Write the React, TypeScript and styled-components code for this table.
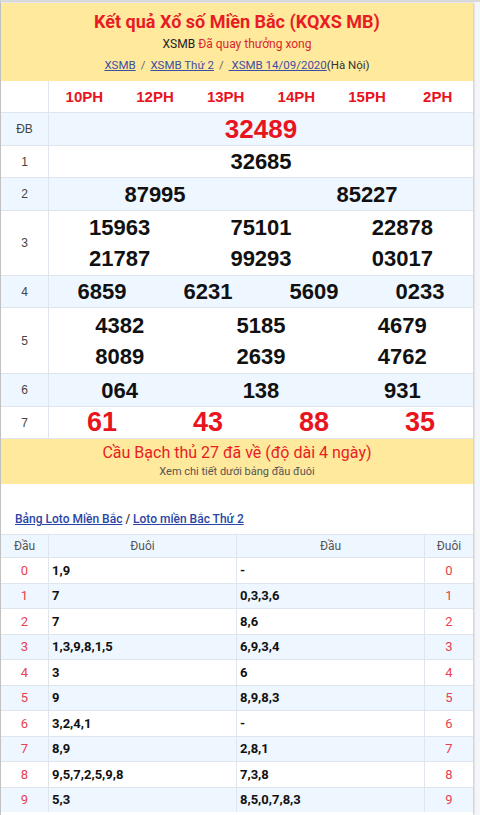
import React from "react";
import styled, { createGlobalStyle } from "styled-components";

const Global = createGlobalStyle`
  html, body { margin: 0; padding: 0; }
  body {
    background: #f5f6fa;
    font-family: Roboto, "Liberation Sans", Arial, sans-serif;
  }
  * { box-sizing: border-box; }
`;

const Page = styled.div`
  border-top: 2px solid #dadada;
  border-left: 1px solid #c4c4c4;
  min-height: 815px;
  display: flex;
`;

const Container = styled.div`
  width: 472px;
  margin-top: 1px;
  background: #fff;
  box-shadow: 1px 0 2px rgba(0, 0, 0, 0.2);
  min-height: 812px;
`;

const Header = styled.div`
  background: #ffe99c;
  padding: 6px 0 7px;
  text-align: center;
`;

const Title = styled.h1`
  margin: 0;
  font-size: 18px;
  line-height: 26px;
  font-weight: 700;
  color: #e81c24;
`;

const Sub = styled.div`
  font-size: 12px;
  line-height: 18px;
  color: #222;
`;

const SubRed = styled.span`
  color: #d8262c;
`;

const Crumbs = styled.div`
  margin-top: 3px;
  font-size: 11.5px;
  line-height: 18px;
  color: #333;
`;

const Crumb = styled.a`
  color: #3d4fa3;
  text-decoration: underline;
`;

const Sep = styled.span`
  color: #666;
  margin: 0 5px;
`;

const Row = styled.div<{ $alt?: boolean; $h: number }>`
  display: grid;
  grid-template-columns: 48px 1fr;
  height: ${(p) => p.$h}px;
  background: ${(p) => (p.$alt ? "#eef6ff" : "#fff")};
  border-bottom: 1px solid #dfe5ec;
`;

const Label = styled.div`
  border-right: 1px solid #dfe5ec;
  display: flex;
  align-items: center;
  justify-content: center;
  font-family: "Liberation Sans", Arial, sans-serif;
  font-size: 12px;
  color: #444;
`;

const Cells = styled.div<{ $cols: number }>`
  display: grid;
  grid-template-columns: repeat(${(p) => p.$cols}, 1fr);
  align-content: center;
`;

const Num = styled.div<{ $size?: number; $red?: boolean; $lh?: number }>`
  text-align: center;
  font-family: "Liberation Sans", Arial, sans-serif;
  font-weight: 700;
  font-size: ${(p) => p.$size ?? 22}px;
  line-height: ${(p) => p.$lh ?? 31}px;
  color: ${(p) => (p.$red ? "#e8141e" : "#111")};
`;

const Banner = styled.div`
  background: #ffe99c;
  height: 45px;
  text-align: center;
  padding-top: 3px;
`;

const BannerTitle = styled.div`
  font-size: 16px;
  line-height: 22px;
  color: #e81c24;
`;

const BannerSub = styled.div`
  font-size: 11px;
  line-height: 16px;
  color: #555;
`;

const Links = styled.div`
  padding: 26px 0 6px 14px;
  font-size: 12px;
  line-height: 18px;
  font-weight: 500;
  color: #333;
`;

const LotoLink = styled.a`
  color: #2a45a6;
  text-decoration: underline;
`;

const LotoRow = styled.div<{ $alt?: boolean; $h: number }>`
  display: grid;
  grid-template-columns: 48px 188px 188px 48px;
  height: ${(p) => p.$h}px;
  background: ${(p) => (p.$alt ? "#eef6ff" : "#fff")};
  border-top: 1px solid #dfe5ec;
`;

const LotoCell = styled.div<{ $kind: "head" | "key" | "val" }>`
  display: flex;
  align-items: center;
  justify-content: ${(p) => (p.$kind === "val" ? "flex-start" : "center")};
  padding-left: ${(p) => (p.$kind === "val" ? "3px" : "0")};
  border-right: 1px solid #dfe5ec;
  font-size: ${(p) => (p.$kind === "head" ? "12px" : "13px")};
  font-weight: ${(p) => (p.$kind === "val" ? 700 : 400)};
  color: ${(p) =>
    p.$kind === "head" ? "#555" : p.$kind === "key" ? "#e8414d" : "#111"};
  &:last-child { border-right: none; }
`;

const times = ["10PH", "12PH", "13PH", "14PH", "15PH", "2PH"];

type Prize = { label: string; cols: number; nums: string[]; h: number; size?: number; red?: boolean };

const prizes: Prize[] = [
  { label: "ĐB", cols: 1, nums: ["32489"], h: 33, size: 26, red: true },
  { label: "1", cols: 1, nums: ["32685"], h: 32 },
  { label: "2", cols: 2, nums: ["87995", "85227"], h: 33 },
  { label: "3", cols: 3, nums: ["15963", "75101", "22878", "21787", "99293", "03017"], h: 65 },
  { label: "4", cols: 4, nums: ["6859", "6231", "5609", "0233"], h: 32 },
  { label: "5", cols: 3, nums: ["4382", "5185", "4679", "8089", "2639", "4762"], h: 66 },
  { label: "6", cols: 3, nums: ["064", "138", "931"], h: 33 },
  { label: "7", cols: 4, nums: ["61", "43", "88", "35"], h: 32, size: 27, red: true },
];

const loto = [
  ["0", "1,9", "-", "0"],
  ["1", "7", "0,3,3,6", "1"],
  ["2", "7", "8,6", "2"],
  ["3", "1,3,9,8,1,5", "6,9,3,4", "3"],
  ["4", "3", "6", "4"],
  ["5", "9", "8,9,8,3", "5"],
  ["6", "3,2,4,1", "-", "6"],
  ["7", "8,9", "2,8,1", "7"],
  ["8", "9,5,7,2,5,9,8", "7,3,8", "8"],
  ["9", "5,3", "8,5,0,7,8,3", "9"],
];

export default function App() {
  return (
    <>
      <Global />
      <Page>
        <Container>
          <Header>
            <Title>Kết quả Xổ số Miền Bắc (KQXS MB)</Title>
            <Sub>
              XSMB <SubRed>Đã quay thưởng xong</SubRed>
            </Sub>
            <Crumbs>
              <Crumb>XSMB</Crumb>
              <Sep>/</Sep>
              <Crumb>XSMB Thứ 2</Crumb>
              <Sep>/</Sep>
              <Crumb> XSMB 14/09/2020</Crumb>(Hà Nội)
            </Crumbs>
          </Header>

          <Row $h={32}>
            <Label />
            <Cells $cols={6}>
              {times.map((t) => (
                <Num key={t} $size={15} $red>
                  {t}
                </Num>
              ))}
            </Cells>
          </Row>
          {prizes.map((p, i) => (
            <Row key={p.label} $h={p.h} $alt={i % 2 === 0}>
              <Label>{p.label}</Label>
              <Cells $cols={p.cols}>
                {p.nums.map((n, j) => (
                  <Num key={j} $size={p.size} $red={p.red}>
                    {n}
                  </Num>
                ))}
              </Cells>
            </Row>
          ))}

          <Banner>
            <BannerTitle>Cầu Bạch thủ 27 đã về (độ dài 4 ngày)</BannerTitle>
            <BannerSub>Xem chi tiết dưới bảng đầu đuôi</BannerSub>
          </Banner>

          <Links>
            <LotoLink>Bảng Loto Miền Bắc</LotoLink> / <LotoLink>Loto miền Bắc Thứ 2</LotoLink>
          </Links>

          <LotoRow $h={23} $alt>
            <LotoCell $kind="head">Đầu</LotoCell>
            <LotoCell $kind="head">Đuôi</LotoCell>
            <LotoCell $kind="head">Đầu</LotoCell>
            <LotoCell $kind="head">Đuôi</LotoCell>
          </LotoRow>
          {loto.map((r, i) => (
            <LotoRow key={r[0]} $h={25.5} $alt={i % 2 === 1}>
              <LotoCell $kind="key">{r[0]}</LotoCell>
              <LotoCell $kind="val">{r[1]}</LotoCell>
              <LotoCell $kind="val">{r[2]}</LotoCell>
              <LotoCell $kind="key">{r[3]}</LotoCell>
            </LotoRow>
          ))}
        </Container>
      </Page>
    </>
  );
}
